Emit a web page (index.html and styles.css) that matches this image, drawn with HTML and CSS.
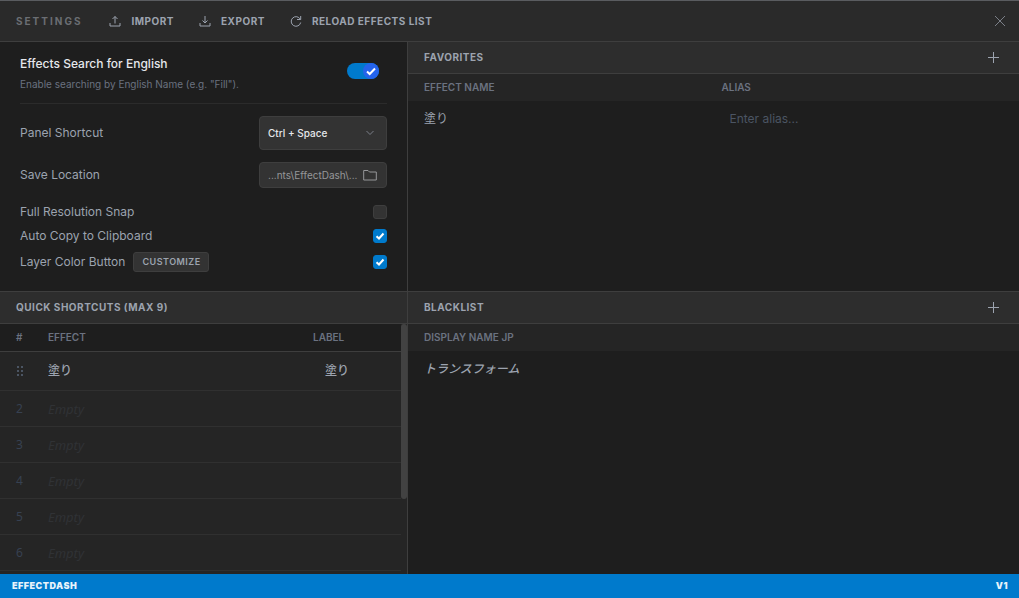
FILE: index.html
```html
<!DOCTYPE html>
<html lang="en">
<head>
<meta charset="utf-8">
<meta name="viewport" content="width=device-width, initial-scale=1">
<title>EffectDash Settings</title>
<link rel="stylesheet" href="styles.css">
</head>
<body>
<div class="app">
  <header class="topbar">
    <h1 class="topbar-title">SETTINGS</h1>
    <button class="tool" type="button">
      <svg class="icon" viewBox="0 0 12 12"><path d="M6 8.500V1.500M3.500 4L6 1.500 8.500 4M1 8V11H11V8"/></svg>
      IMPORT
    </button>
    <button class="tool" type="button">
      <svg class="icon" viewBox="0 0 12 12"><path d="M6 1V8M3.500 5.500L6 8 8.500 5.500M1 8V11H11V8"/></svg>
      EXPORT
    </button>
    <button class="tool" type="button">
      <svg class="icon" viewBox="0 0 12 12"><path d="M10.700 1V4.500H7M10.300 4.300A4.800 4.800 0 1 0 10.700 7.500"/></svg>
      RELOAD EFFECTS LIST
    </button>
    <button class="close" type="button" aria-label="Close">
      <svg class="icon" viewBox="0 0 12 12"><path d="M1 1L11 11M11 1L1 11"/></svg>
    </button>
  </header>

  <main class="panes">
    <section class="pane options">
      <div class="feature">
        <label class="feature-text" for="english">
          <span class="feature-name">Effects Search for English</span>
          <span class="feature-note">Enable searching by English Name (e.g. "Fill").</span>
        </label>
        <span class="switch">
          <input class="switch-input" id="english" type="checkbox" checked>
          <svg class="switch-tick" viewBox="0 0 16 16"><circle cx="8" cy="8" r="8"/><path d="M4 8.500L6.700 11 12 5.500"/></svg>
        </span>
      </div>
      <div class="fields">
        <div class="field">
          <label for="shortcut">Panel Shortcut</label>
          <span class="picker">
            <select class="picker-select" id="shortcut"><option>Ctrl + Space</option></select>
            <svg class="picker-arrow" viewBox="0 0 8 6"><path d="M.5 1L4 4.500 7.500 1"/></svg>
          </span>
        </div>
        <div class="field">
          <label for="location">Save Location</label>
          <button class="location" id="location" type="button">
            ...nts\EffectDash\...
            <svg class="folder" viewBox="0 0 14 12"><path d="M.7 1.500H5L6.500 3H13.300V11H.7Z"/></svg>
          </button>
        </div>
      </div>
      <div class="checks">
        <div class="check-row">
          <label for="snap">Full Resolution Snap</label>
          <span class="check"><input class="check-input" id="snap" type="checkbox"></span>
        </div>
        <div class="check-row">
          <label for="copy">Auto Copy to Clipboard</label>
          <span class="check"><input class="check-input" id="copy" type="checkbox" checked><svg class="tick" viewBox="0 0 14 14"><path d="M3.500 7.200L6 9.500 10.500 4.500"/></svg></span>
        </div>
        <div class="check-row check-row-tall">
          <label for="layer">Layer Color Button</label>
          <button class="customize" type="button">CUSTOMIZE</button>
          <span class="check"><input class="check-input" id="layer" type="checkbox" checked><svg class="tick" viewBox="0 0 14 14"><path d="M3.500 7.200L6 9.500 10.500 4.500"/></svg></span>
        </div>
      </div>
    </section>

    <section class="pane favorites">
      <div class="pane-head">
        <h2 class="pane-title">FAVORITES</h2>
        <button class="add" type="button" aria-label="Add favorite"><svg class="plus" viewBox="0 0 11 11"><path d="M5.500 0V11M0 5.500H11"/></svg></button>
      </div>
      <table class="list">
        <thead><tr><th>EFFECT NAME</th><th>ALIAS</th></tr></thead>
        <tbody><tr><td>塗り</td><td><input class="alias" type="text" placeholder="Enter alias..." aria-label="Alias"></td></tr></tbody>
      </table>
    </section>

    <section class="pane shortcuts">
      <div class="pane-head"><h2 class="pane-title">QUICK SHORTCUTS (MAX 9)</h2></div>
      <div class="scroll">
        <div class="scroll-view">
          <table class="quick">
            <thead><tr><th class="slot">#</th><th>EFFECT</th><th class="tag">LABEL</th></tr></thead>
            <tbody>
              <tr class="filled">
                <td class="slot"><svg class="grip" viewBox="0 0 8 12"><path d="M1 1h2v2h-2zM5 1h2v2h-2zM1 5h2v2h-2zM5 5h2v2h-2zM1 9h2v2h-2zM5 9h2v2h-2z"/></svg></td>
                <td>塗り</td><td class="tag tag-value">塗り</td>
              </tr>
              <tr><td class="slot">2</td><td class="empty" colspan="2">Empty</td></tr>
              <tr><td class="slot">3</td><td class="empty" colspan="2">Empty</td></tr>
              <tr><td class="slot">4</td><td class="empty" colspan="2">Empty</td></tr>
              <tr><td class="slot">5</td><td class="empty" colspan="2">Empty</td></tr>
              <tr><td class="slot">6</td><td class="empty" colspan="2">Empty</td></tr>
            </tbody>
          </table>
        </div>
        <div class="scroll-track" aria-hidden="true"><div class="scroll-thumb"></div></div>
      </div>
    </section>

    <section class="pane blacklist">
      <div class="pane-head">
        <h2 class="pane-title">BLACKLIST</h2>
        <button class="add" type="button" aria-label="Add to blacklist"><svg class="plus" viewBox="0 0 11 11"><path d="M5.500 0V11M0 5.500H11"/></svg></button>
      </div>
      <table class="list">
        <thead><tr><th>DISPLAY NAME JP</th></tr></thead>
        <tbody><tr><td class="blocked">トランスフォーム</td></tr></tbody>
      </table>
    </section>
  </main>

  <footer class="status"><span>EFFECTDASH</span><span>V1</span></footer>
</div>
</body>
</html>
```
FILE: styles.css
```css
* { box-sizing: border-box; }

body {
  margin: 0;
  background: #1e1e1e;
  color: #9ca3af;
  font: 12px/16px Inter, "Noto Sans CJK JP", sans-serif;
}

button, input, select { font: inherit; color: inherit; }
button { cursor: pointer; }
h1, h2 { margin: 0; }
svg { display: block; fill: none; stroke: currentColor; }

.app {
  display: flex;
  flex-direction: column;
  height: 100vh;
  border-top: 1px solid #5a5c60;
}

/* Top bar */
.topbar {
  display: flex;
  align-items: center;
  gap: 25px;
  flex: 0 0 41px;
  padding: 0 12px 0 16px;
  background: #2a2a2a;
  border-bottom: 1px solid #3e3e3e;
}
.topbar-title {
  margin-right: 2px;
  font-size: 10px;
  font-weight: 700;
  letter-spacing: 2px;
  color: #6b6e73;
}
.tool {
  display: flex;
  align-items: center;
  gap: 10px;
  padding: 0;
  border: 0;
  background: none;
  font-size: 10px;
  font-weight: 700;
  letter-spacing: .5px;
}
.icon { width: 12px; height: 12px; }
.close {
  margin-left: auto;
  padding: 1px;
  border: 0;
  background: none;
  color: #7b7f88;
}

/* Four panes */
.panes {
  flex: 1;
  min-height: 0;
  display: grid;
  grid-template-columns: 408fr 611fr;
  grid-template-rows: 250px minmax(0, 1fr);
}
.pane {
  display: flex;
  flex-direction: column;
  min-width: 0;
  min-height: 0;
}
.options, .shortcuts { border-right: 1px solid #3e3e3e; }
.options, .favorites { border-bottom: 1px solid #3e3e3e; }
.pane-head {
  display: flex;
  align-items: center;
  justify-content: space-between;
  flex: 0 0 32px;
  padding: 0 20px 0 16px;
  background: #2d2d2d;
  border-bottom: 1px solid #3e3e3e;
}
.pane-title {
  font-size: 10px;
  line-height: 14px;
  padding-bottom: 1px;
  font-weight: 700;
  letter-spacing: .5px;
}
.add { padding: 0; border: 0; background: none; }
.plus { width: 11px; height: 11px; }

/* Options */
.options { padding: 12px 20px 0; }
.feature {
  display: flex;
  align-items: flex-start;
  justify-content: space-between;
  height: 50px;
  padding-right: 8px;
  border-bottom: 1px solid #2b2b2b;
}
.feature-text { display: grid; gap: 4px; padding-top: 2px; }
.feature-name { font-weight: 500; color: #e5e7eb; }
.feature-note { font-size: 10px; color: #6b7280; }
.switch { display: grid; width: 32px; height: 16px; margin-top: 9px; }
.switch-input {
  grid-area: 1 / 1;
  appearance: none;
  width: 32px;
  height: 16px;
  margin: 0;
  border-radius: 8px;
  background: #007acc;
}
.switch-tick {
  grid-area: 1 / 1;
  justify-self: end;
  width: 16px;
  height: 16px;
  pointer-events: none;
}
.switch-tick circle { fill: #2563eb; stroke: none; }
.switch-tick path { stroke: #fff; stroke-width: 2; }

.fields { display: grid; gap: 12px; padding-top: 12px; }
.field { display: flex; align-items: center; justify-content: space-between; }
.picker { display: grid; align-items: center; width: 128px; }
.picker-select {
  grid-area: 1 / 1;
  appearance: none;
  height: 34px;
  padding: 0 8px;
  border: 1px solid #3e3e3e;
  border-radius: 4px;
  background: #333;
  color: #e5e7eb;
  font-size: 10px;
  font-weight: 500;
}
.picker-arrow {
  grid-area: 1 / 1;
  justify-self: end;
  width: 8px;
  height: 6px;
  margin-right: 13px;
  color: #7b7f88;
  pointer-events: none;
}
.location {
  display: flex;
  align-items: center;
  justify-content: space-between;
  width: 128px;
  height: 26px;
  padding: 0 9px 0 8px;
  border: 1px solid #3e3e3e;
  border-radius: 4px;
  background: #333;
  color: #969799;
  font-size: 10px;
}
.folder { width: 14px; height: 12px; }

.checks { display: grid; gap: 8px; padding-top: 16px; }
.check-row { display: flex; align-items: center; gap: 8px; }
.check-row-tall { height: 20px; }
.check { display: grid; margin-left: auto; }
.check-input {
  grid-area: 1 / 1;
  appearance: none;
  width: 14px;
  height: 14px;
  margin: 0;
  border: 1px solid #3e3e3e;
  border-radius: 3px;
  background: #333;
}
.check-input:checked { border-color: #007acc; background: #007acc; }
.tick {
  grid-area: 1 / 1;
  width: 14px;
  height: 14px;
  color: #fff;
  stroke-width: 2;
  pointer-events: none;
}
.customize {
  height: 20px;
  padding: 0 7px 0 8px;
  border: 1px solid #3e3e3e;
  border-radius: 3px;
  background: #333;
  font-size: 9px;
  line-height: 16px;
  font-weight: 600;
  letter-spacing: .5px;
}

/* Tables */
table { width: 100%; border-collapse: separate; border-spacing: 0; table-layout: fixed; }
th, td { padding: 0; text-align: left; }
th {
  height: 27px;
  color: #6b7280;
  font-size: 10px;
  line-height: 14px;
  font-weight: 600;
}
.list th { background: #252525; }
.list th, .list td { padding-left: 16px; }
.list th, .quick th { padding-bottom: 1px; }
.list td { height: 36px; }
.list td + td, .list th + th { padding-left: 8px; }
.alias {
  width: 100%;
  padding: 0 8px;
  border: 0;
  background: none;
}
.alias::placeholder { color: #4b5563; }
.blocked { font-style: italic; font-weight: 500; }

.scroll {
  flex: 1;
  min-height: 0;
  display: flex;
  background: #252525;
}
.scroll-view {
  flex: 1;
  min-width: 0;
  overflow-y: auto;
}
.scroll-track { flex: 0 0 6px; }
.scroll-thumb { height: 70%; border-radius: 3px; background: #424242; }
.quick th {
  height: 28px;
  background: #1e1e1e;
  border-bottom: 1px solid #3e3e3e;
}
.quick td { height: 36px; border-bottom: 1px solid #303030; }
.quick .filled td { height: 39px; font-weight: 500; }
.quick .slot { width: 48px; padding-left: 16px; }
.quick .tag { width: 88px; }
.quick .tag-value { padding-left: 12px; }
.quick td.slot {
  color: #374151;
  font-family: "Noto Sans", sans-serif;
}
.quick td.empty {
  color: #303235;
  font-family: "Noto Sans", sans-serif;
  font-size: 13px;
  font-style: italic;
}
.grip { width: 8px; height: 12px; }
.grip path { fill: #4b5563; stroke: none; }

/* Status bar */
.status {
  display: flex;
  align-items: center;
  justify-content: space-between;
  flex: 0 0 24px;
  padding: 0 11px 0 12px;
  background: #007acc;
  color: #e8f3fb;
  font-size: 9px;
  font-weight: 900;
  letter-spacing: .5px;
}
```
